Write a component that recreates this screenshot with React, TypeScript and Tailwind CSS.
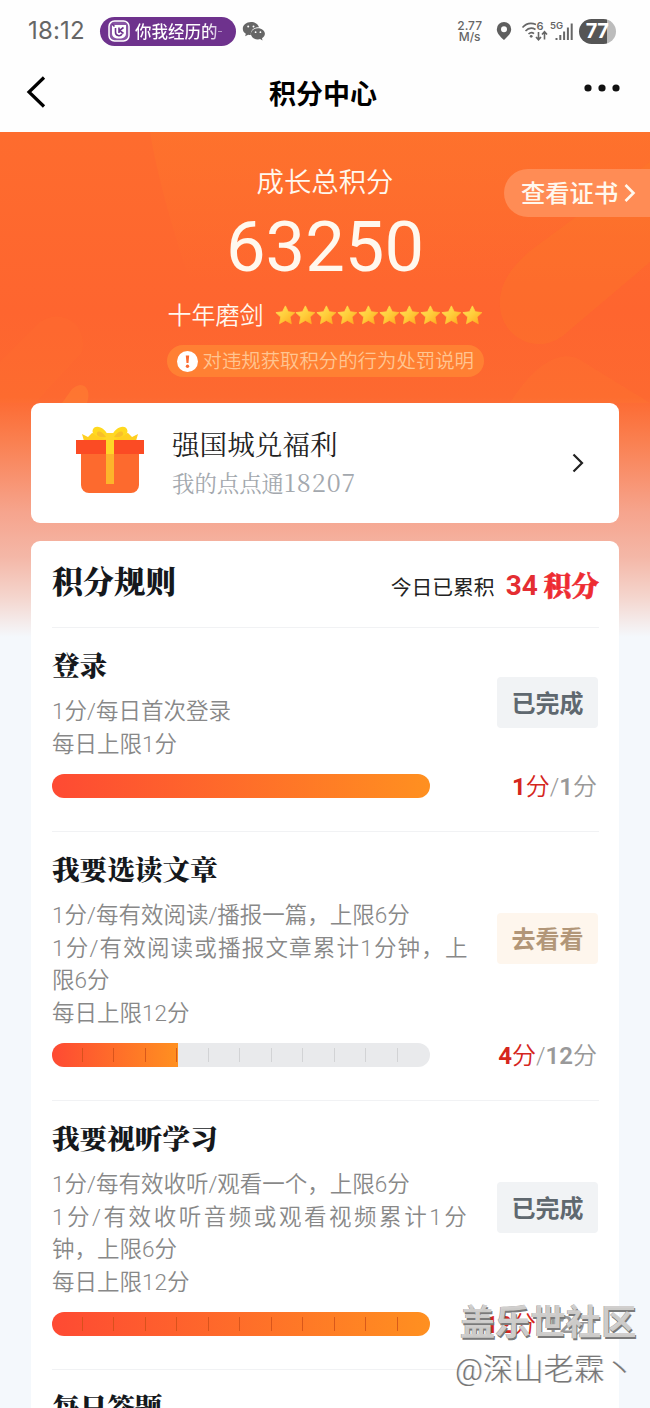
import React from "react";

const SERIF = "font-['Noto_Serif_CJK_SC','Noto_Serif_SC','Source_Han_Serif_SC','Noto_Sans_CJK_SC',serif]";

function StatusBar() {
  return (
    <div className="flex h-[60px] items-center justify-between pl-[28px] pr-[34px] pt-[2px] text-[#666]">
      <div className="flex items-center">
        <span className="w-[72px] font-['Inter','Noto_Sans_CJK_SC',sans-serif] text-[24px] leading-none tracking-[0.200px]">18:12</span>
        <div className="flex h-[29px] w-[136px] items-center rounded-full bg-[#6e328d] pl-[8px] text-white">
          <svg width="22" height="22" viewBox="0 0 22 22" fill="none">
            <rect x="1" y="1" width="20" height="20" rx="5.500" fill="#8a55a5" stroke="#fff" strokeWidth="1.500" />
            <path d="M4 5h14v8.500a5 5 0 0 1-5 5H9a5 5 0 0 1-5-5z" fill="#fff" />
            <path d="M7.500 8v4a3.500 3.500 0 0 0 6.500 2M11 7.500v5.500M15.500 7.500 11.500 10.500l4 3M4 4l2.500 2.500" stroke="#6e328d" strokeWidth="1.600" />
          </svg>
          <span className="ml-[5px] whitespace-nowrap bg-[linear-gradient(90deg,#fff_85%,#d3bfdd)] bg-clip-text font-['Noto_Sans_CJK_SC',sans-serif] text-[16.500px] font-medium leading-[26px] text-transparent">你我经历的</span>
          <span className="h-px w-[4px] bg-white/50" />
        </div>
        <svg className="ml-[6px]" width="24" height="20" viewBox="0 0 24 20" fill="#666">
          <path d="M9 1C4.300 1 .8 4 .8 7.700c0 2.100 1.100 3.900 3 5.100L3.200 15.300l3-1.500c.8.200 1.700.3 2.700.3C8 9.500 12 6 17 6.200 16.200 3.200 13 1 9 1Z" />
          <path d="M15.900 7.200c-4 0-7 2.500-7 5.600s3 5.600 7 5.600c.8 0 1.500-.1 2.200-.3l2.400 1.300-.5-2.100c1.800-1.100 2.900-2.700 2.900-4.500 0-3.100-3.100-5.600-7-5.600Z" />
          <circle cx="6.200" cy="5.500" r="1" fill="#fff" /><circle cx="11.500" cy="5.500" r="1" fill="#fff" />
          <circle cx="13.600" cy="11.200" r=".9" fill="#fff" /><circle cx="18.400" cy="11.200" r=".9" fill="#fff" />
        </svg>
      </div>
      <div className="flex items-center">
        <div className="mr-[14px] flex flex-col items-center font-['Inter',sans-serif] text-[12px] font-medium leading-[11.500px]">
          <span>2.77</span>
          <span>M/s</span>
        </div>
        <svg width="16" height="20" viewBox="0 0 16 20" fill="#5f5f5f">
          <path fillRule="evenodd" d="M8 1a7.200 7.200 0 0 0-7.200 7.200C.8 12 4 15.500 8 19c4-3.500 7.200-7 7.200-10.800A7.200 7.200 0 0 0 8 1Zm0 4.300a3 3 0 1 1 0 6 3 3 0 0 1 0-6Z" />
        </svg>
        <svg className="ml-[9px]" width="28" height="21" viewBox="0 0 28 21" fill="none" stroke="#666" strokeWidth="1.600">
          <path d="M1.500 6.500C5 2.500 10 1.500 15 3.500M4.500 10C7 7.300 11 6.500 14.500 8.500M7.500 13c1.700-1.600 4-1.700 5.500-.3" />
          <circle cx="10.200" cy="15.300" r="1.400" fill="#666" stroke="none" />
          <path d="M17.500 11v7.500M15 16l2.500 2.800L20 16M23.500 18.500v-7M21 13.500l2.500-2.800L26 13.500" />
          <text x="15.500" y="9" fontSize="11" fontFamily="Inter" fontWeight="600" fill="#666" stroke="none">6</text>
        </svg>
        <svg className="ml-[1px]" width="24" height="22" viewBox="0 0 24 22" fill="#666">
          <text x="0" y="9" fontSize="9.500" fontFamily="Inter" fontWeight="600">5G</text>
          <rect x="5.500" y="18" width="2" height="2" /><rect x="9.300" y="15" width="2" height="5" />
          <rect x="13.100" y="11.500" width="2" height="8.500" /><rect x="16.900" y="7.500" width="2" height="12.500" />
          <rect x="20.700" y="3.500" width="2" height="16.500" />
        </svg>
        <div className="ml-[5px] flex h-[25px] w-[37px] items-center justify-center overflow-hidden rounded-full bg-[linear-gradient(90deg,#555_77%,#bcbcbc_77%)] pr-[1px] font-['Inter',sans-serif] text-[20px] font-bold leading-none tracking-[-0.500px] text-white">77</div>
      </div>
    </div>
  );
}

function TitleBar() {
  return (
    <div className="flex h-[72px] items-start justify-between pl-[26px] pr-[30px]">
      <svg className="mt-[15px]" width="36" height="34" viewBox="0 0 36 34" fill="none" stroke="#000" strokeWidth="3.200">
        <path d="M18 2.500 3 17l15 14.500" />
      </svg>
      <h1 className="mt-[21px] text-[27px] font-bold leading-[29px] text-black">积分中心</h1>
      <svg width="36" height="8" viewBox="0 0 36 8" fill="#111" className="mt-[24px]">
        <circle cx="4" cy="4" r="3.600" /><circle cx="18" cy="4" r="3.600" /><circle cx="32" cy="4" r="3.600" />
      </svg>
    </div>
  );
}

function Star() {
  return (
    <svg width="20.800" height="20" viewBox="0 0 21 20">
      <defs>
        <linearGradient id="star" x1="0" y1="0" x2="1" y2="1">
          <stop offset="0" stopColor="#ffe45c" /><stop offset=".5" stopColor="#ffcd3a" /><stop offset="1" stopColor="#ffa51e" />
        </linearGradient>
      </defs>
      <path d="M10.500.8 13.400 6.700l6.700.9-4.900 4.500 1.300 6.700-6-3.300-6 3.300 1.300-6.700L.9 7.600l6.700-.9Z" fill="url(#star)" stroke="url(#star)" strokeWidth=".8" strokeLinejoin="round" />
    </svg>
  );
}

function Hero() {
  return (
    <section className="relative flex h-[271px] flex-col items-center text-[#fff8ee]">
      <div className="mt-[31px] text-[27.400px] font-[350] leading-[40px]">成长总积分</div>
      <div className="mt-[4px] font-['Roboto',sans-serif] text-[70.500px] leading-[80px]">63250</div>
      <div className="mt-[12px] flex h-[32px] items-center">
        <span className="mr-[11px] pt-[2px] text-[24px] font-[350] leading-none">十年磨剑</span>
        <div className="flex">{Array.from({ length: 10 }, (_, i) => <Star key={i} />)}</div>
      </div>
      <div className="mt-[14px] flex h-[32px] w-[317px] items-center rounded-full bg-[#ff8033] pl-[10px]">
        <svg width="21" height="21" viewBox="0 0 21 21">
          <circle cx="10.500" cy="10.500" r="10.500" fill="#fff" />
          <path d="M8.800 4.500h3.400l-.7 7.500h-2z" fill="#fb6a30" /><circle cx="10.500" cy="15.300" r="1.700" fill="#fb6a30" />
        </svg>
        <span className="ml-[5px] whitespace-nowrap pt-[1px] text-[19.400px] font-[350] leading-none text-[#ffc591]">对违规获取积分的行为处罚说明</span>
      </div>
      <button className="absolute right-0 top-[37px] flex h-[48px] w-[146px] items-center rounded-l-full bg-[#ff8c55] pl-[17px] text-[24.300px] font-medium leading-none">
        <span className="whitespace-nowrap pt-[2px]">查看证书</span>
        <svg className="ml-[6px]" width="12" height="20" viewBox="0 0 12 20" fill="none" stroke="#fff8ee" strokeWidth="2.600"><path d="m1.500 2 8 8-8 8" /></svg>
      </button>
    </section>
  );
}

function GiftIcon() {
  return (
    <svg className="-mt-[7px]" width="68" height="68" viewBox="0 0 68 68">
      <path d="M8 15 6 8l6 3 4-4 13 2h10l13-2 4 4 6-3-2 7Z" fill="#ffcf1f" />
      <path d="M33 12C29-1 17-2 16.500 5c0 4 5 6 16.500 9ZM35 12C39-1 51-2 51.500 5c0 4-5 6-16.500 9Z" fill="#ffd91f" />
      <path d="M30 11c-3-5-8-7-9-4s3 5 9 4ZM38 11c3-5 8-7 9-4s-3 5-9 4Z" fill="#f8bf2a" />
      <path d="M5 27h58v32a8 8 0 0 1-8 8H13a8 8 0 0 1-8-8Z" fill="#fd6a2e" />
      <path d="M0 14h68v14H0Z" fill="#fb4b24" />
      <path d="M30 7h8v21h-8Z" fill="#ffd628" /><path d="M30 28h8v30h-8Z" fill="#fdb42b" />
    </svg>
  );
}

function BenefitsCard() {
  return (
    <section className="flex h-[120px] items-center rounded-[9px] bg-white pl-[45px] pr-[34px]">
      <GiftIcon />
      <div className={`-mt-[3px] ml-[28px] flex-1 whitespace-nowrap ${SERIF}`}>
        <div className="text-[27.600px] leading-[40px] text-[#222]">强国城兑福利</div>
        <div className="text-[22.400px] leading-[36px] text-[#a3a8ae]">
          我的点点通<span className="text-[25px] tracking-[1px]">18207</span>
        </div>
      </div>
      <svg width="14" height="20" viewBox="0 0 14 20" fill="none" stroke="#222" strokeWidth="2.200"><path d="m2.500 1.500 8.500 8.500-8.500 8.500" /></svg>
    </section>
  );
}

type Line = { text: string; spacing?: string };
type Task = { title: string; lines: Line[]; done: boolean; score: number; total: number };

const tasks: Task[] = [
  { title: "登录", lines: [{ text: "1分/每日首次登录" }, { text: "每日上限1分" }], done: true, score: 1, total: 1 },
  {
    title: "我要选读文章",
    lines: [
      { text: "1分/每有效阅读/播报一篇，上限6分" },
      { text: "1分/有效阅读或播报文章累计1分钟，上", spacing: "tracking-[1.200px]" },
      { text: "限6分" },
      { text: "每日上限12分" },
    ],
    done: false, score: 4, total: 12,
  },
  {
    title: "我要视听学习",
    lines: [
      { text: "1分/每有效收听/观看一个，上限6分" },
      { text: "1分/有效收听音频或观看视频累计1分", spacing: "tracking-[2.550px]" },
      { text: "钟，上限6分" },
      { text: "每日上限12分" },
    ],
    done: true, score: 12, total: 12,
  },
];

function Progress({ score, total }: { score: number; total: number }) {
  return (
    <div className="grid h-[24px] w-[378px] overflow-hidden rounded-full bg-[#e9eaec]">
      <div className="col-start-1 row-start-1 bg-[linear-gradient(90deg,#fe4a33,#ff9020)]" style={{ width: `${(score / total) * 100}%` }} />
      <div className="col-start-1 row-start-1 flex items-center">
        {Array.from({ length: total }, (_, i) => (
          <div key={i} className="flex h-[14px] flex-1 justify-end pr-px">
            {i < total - 1 && <span className={i < score ? "w-px bg-[#d04f18]/80" : "w-px bg-[#d2d3d5]"} />}
          </div>
        ))}
      </div>
    </div>
  );
}

function TaskRow({ task }: { task: Task }) {
  return (
    <article className="border-t border-[#f1f2f4] pb-[33px] pt-[16px]">
      <div className="flex items-center justify-between pr-[1px]">
        <div className="whitespace-nowrap">
          <h3 className={`mb-[11px] text-[27.600px] font-black leading-[40px] text-[#15181c] ${SERIF}`}>{task.title}</h3>
          {task.lines.map((l) => (
            <p key={l.text} className={`text-[22.500px] font-[350] leading-[32.500px] text-[#888] ${l.spacing ?? ""}`}>{l.text}</p>
          ))}
        </div>
        <button className={`-ml-[20px] h-[51px] w-[101px] shrink-0 rounded-[4px] pt-[3px] text-[24px] font-bold leading-none ${task.done ? "bg-[#f1f3f5] text-[#5f686f]" : "bg-[#fef6ed] text-[#b29678]"}`}>
          {task.done ? "已完成" : "去看看"}
        </button>
      </div>
      <div className="mt-[14px] flex h-[24px] items-center justify-between pr-[2px]">
        <Progress score={task.score} total={task.total} />
        <div className="whitespace-nowrap pt-[1px] text-[24px] font-[350] leading-[24px] text-[#999]">
          <span className="text-[#d5261d]"><b>{task.score}</b>分</span>/<b className="font-semibold">{task.total}</b>分
        </div>
      </div>
    </article>
  );
}

function RulesCard() {
  return (
    <section className="mt-[18px] rounded-t-[9px] bg-white pl-[21px] pr-[20px]">
      <header className="flex h-[86px] items-center justify-between">
        <h2 className={`-mt-[10px] text-[31px] font-black leading-none text-[#15181c] ${SERIF}`}>积分规则</h2>
        <div className="flex items-center pt-[4px] leading-none">
          <span className="mr-[11px] pt-[4px] text-[20.800px] text-[#222]">今日已累积</span>
          <span className="mr-[6px] text-[28px] font-bold text-[#e42d32]">34</span>
          <span className={`-mt-[3px] text-[27.600px] font-black text-[#ee2c32] [-webkit-text-stroke:0.600px_#ee2c32] ${SERIF}`}>积分</span>
        </div>
      </header>
      {tasks.map((t) => <TaskRow key={t.title} task={t} />)}
      <article className="h-[60px] border-t border-[#f1f2f4] pt-[16px]">
        <h3 className={`text-[27.600px] font-black leading-[40px] text-[#15181c] ${SERIF}`}>每日答题</h3>
      </article>
    </section>
  );
}

function Backdrop() {
  return (
    <svg className="absolute left-0 top-0" width="650" height="271" viewBox="0 0 650 271">
      <defs>
        <linearGradient id="glow" x1="0" y1="0" x2="0" y2="1">
          <stop offset="0" stopColor="#ff7a2a" stopOpacity=".4" /><stop offset="1" stopColor="#ff7a2a" stopOpacity="0" />
        </linearGradient>
      </defs>
      <path d="M150 0h500v150H190Q160 60 150 0Z" fill="url(#glow)" />
      <path d="M650 30v100l-85 72c-28 24-68 2-65-35 2-20 14-34 30-48Z" fill="#fb7d28" opacity=".28" />
      <path d="M510 271c20-32 50-60 75-40l65 40Z" fill="#ff8430" opacity=".15" />
      <path d="M0 230 40 190c22-15 48 2 42 30L35 271H0Z" fill="#ff7b32" opacity=".15" />
      <path d="m62 271 10-14c12-10 20 1 15 14Z" fill="#ff8a35" opacity=".4" />
    </svg>
  );
}

function Watermark() {
  return (
    <div className="absolute left-[455px] top-[1300px] whitespace-nowrap">
      <div className="pl-[5px] text-[35.300px] font-bold leading-[46px] text-[#dcdad8]/85 [text-shadow:1px_2px_0_#7a7a7a,-0.500px_-0.500px_0_#999]">盖乐世社区</div>
      <div className="pt-[1px] text-[30.400px] font-light leading-[46px] text-[#777] [text-shadow:1px_-0.500px_0_#ddd]">@深山老霖丶</div>
    </div>
  );
}

export default function App() {
  return (
    <div className="relative h-[1408px] w-[650px] overflow-hidden bg-[#f4f8fc] font-['Roboto','Noto_Sans_CJK_SC',sans-serif]">
      <div className="bg-[#fefefe]">
        <StatusBar />
        <TitleBar />
      </div>
      <main className="relative bg-[linear-gradient(180deg,#fe6c2e_0,#fe652f_180px,#fd6930_265px,#fa8051_310px,#f6a48d_380px,#f4b7a7_425px,#f4d5cd_465px,#f4f8fc_505px)]">
        <Backdrop />
        <Hero />
        <div className="relative px-[31px]">
          <BenefitsCard />
          <RulesCard />
        </div>
      </main>
      <Watermark />
    </div>
  );
}
